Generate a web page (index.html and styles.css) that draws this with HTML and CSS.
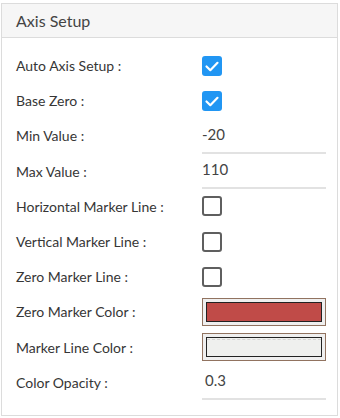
FILE: index.html
```html
<!DOCTYPE html>
<html>
<head>
<meta charset="utf-8">
<link rel="stylesheet" href="styles.css">
</head>
<body>
<div class="panel">
  <div class="panel-header">Axis Setup</div>
  <div class="panel-body">
    <div class="row">
      <span class="label">Auto Axis Setup :</span>
      <span class="check checked"><svg viewBox="0 0 20 20" width="20" height="20"><path d="M4.5 10.5 L8.3 14.2 L15.5 6.8" fill="none" stroke="#fff" stroke-width="2.2" stroke-linecap="round" stroke-linejoin="round"/></svg></span>
    </div>
    <div class="row">
      <span class="label">Base Zero :</span>
      <span class="check checked"><svg viewBox="0 0 20 20" width="20" height="20"><path d="M4.5 10.5 L8.3 14.2 L15.5 6.8" fill="none" stroke="#fff" stroke-width="2.2" stroke-linecap="round" stroke-linejoin="round"/></svg></span>
    </div>
    <div class="row">
      <span class="label">Min Value :</span>
      <span class="input">-20</span>
    </div>
    <div class="row">
      <span class="label">Max Value :</span>
      <span class="input">110</span>
    </div>
    <div class="row">
      <span class="label">Horizontal Marker Line :</span>
      <span class="check"></span>
    </div>
    <div class="row">
      <span class="label">Vertical Marker Line :</span>
      <span class="check"></span>
    </div>
    <div class="row">
      <span class="label">Zero Marker Line :</span>
      <span class="check"></span>
    </div>
    <div class="row">
      <span class="label">Zero Marker Color :</span>
      <span class="color"><span class="swatch red"></span></span>
    </div>
    <div class="row">
      <span class="label">Marker Line Color :</span>
      <span class="color"><span class="swatch light"></span></span>
    </div>
    <div class="row">
      <span class="label">Color Opacity :</span>
      <span class="input opacity">0.3</span>
    </div>
  </div>
</div>
</body>
</html>
```
FILE: styles.css
```css
html, body {
  margin: 0;
  padding: 0;
  background: #ffffff;
  width: 340px;
  height: 418px;
  overflow: hidden;
}
body {
  padding: 3px 0 0 1px;
  box-sizing: border-box;
  font-family: "Lato", "Open Sans", sans-serif;
  color: #3a3a3a;
}
.panel {
  width: 337px;
  height: 413px;
  box-sizing: border-box;
  border: 1px solid #dcdcdc;
  background: #fff;
}
.panel-header {
  height: 34px;
  box-sizing: border-box;
  background: #f6f6f6;
  border-bottom: 1px solid #dcdcdc;
  padding-left: 14px;
  display: flex;
  align-items: center;
  font-size: 16px;
  color: #444;
}
.panel-body {
  padding-top: 10px;
  padding-left: 14px;
}
.row {
  display: grid;
  grid-template-columns: 186px 124px;
  align-items: center;
  height: 35.2px;
}
.label {
  font-size: 14px;
  color: #363636;
}
.check {
  width: 20px;
  height: 20px;
  box-sizing: border-box;
  border: 2px solid #5f5f5f;
  border-radius: 3px;
  display: block;
}
.check.checked {
  border: none;
  background: #2196f3;
}
.check svg { display: block; }
.input {
  height: 100%;
  box-sizing: border-box;
  border-bottom: 2px solid #e2e2e2;
  display: flex;
  align-items: center;
  font-size: 15px;
  color: #444;
  padding-bottom: 2px;
}
.input.opacity { padding-left: 3px; }
.color {
  height: 28px;
  box-sizing: border-box;
  border: 1px solid #917360;
  background: #efefef;
  padding: 3px;
  display: block;
}
.swatch {
  display: block;
  height: 100%;
  box-sizing: border-box;
  border: 1px solid #222;
}
.swatch.red { background: #c04b48; }
.swatch.light {
  background: #eff0ee;
  position: relative;
}
.swatch.light::before {
  content: "";
  position: absolute;
  left: 0;
  right: 0;
  top: 1px;
  border-top: 1px dashed #d4d4d4;
}
```
